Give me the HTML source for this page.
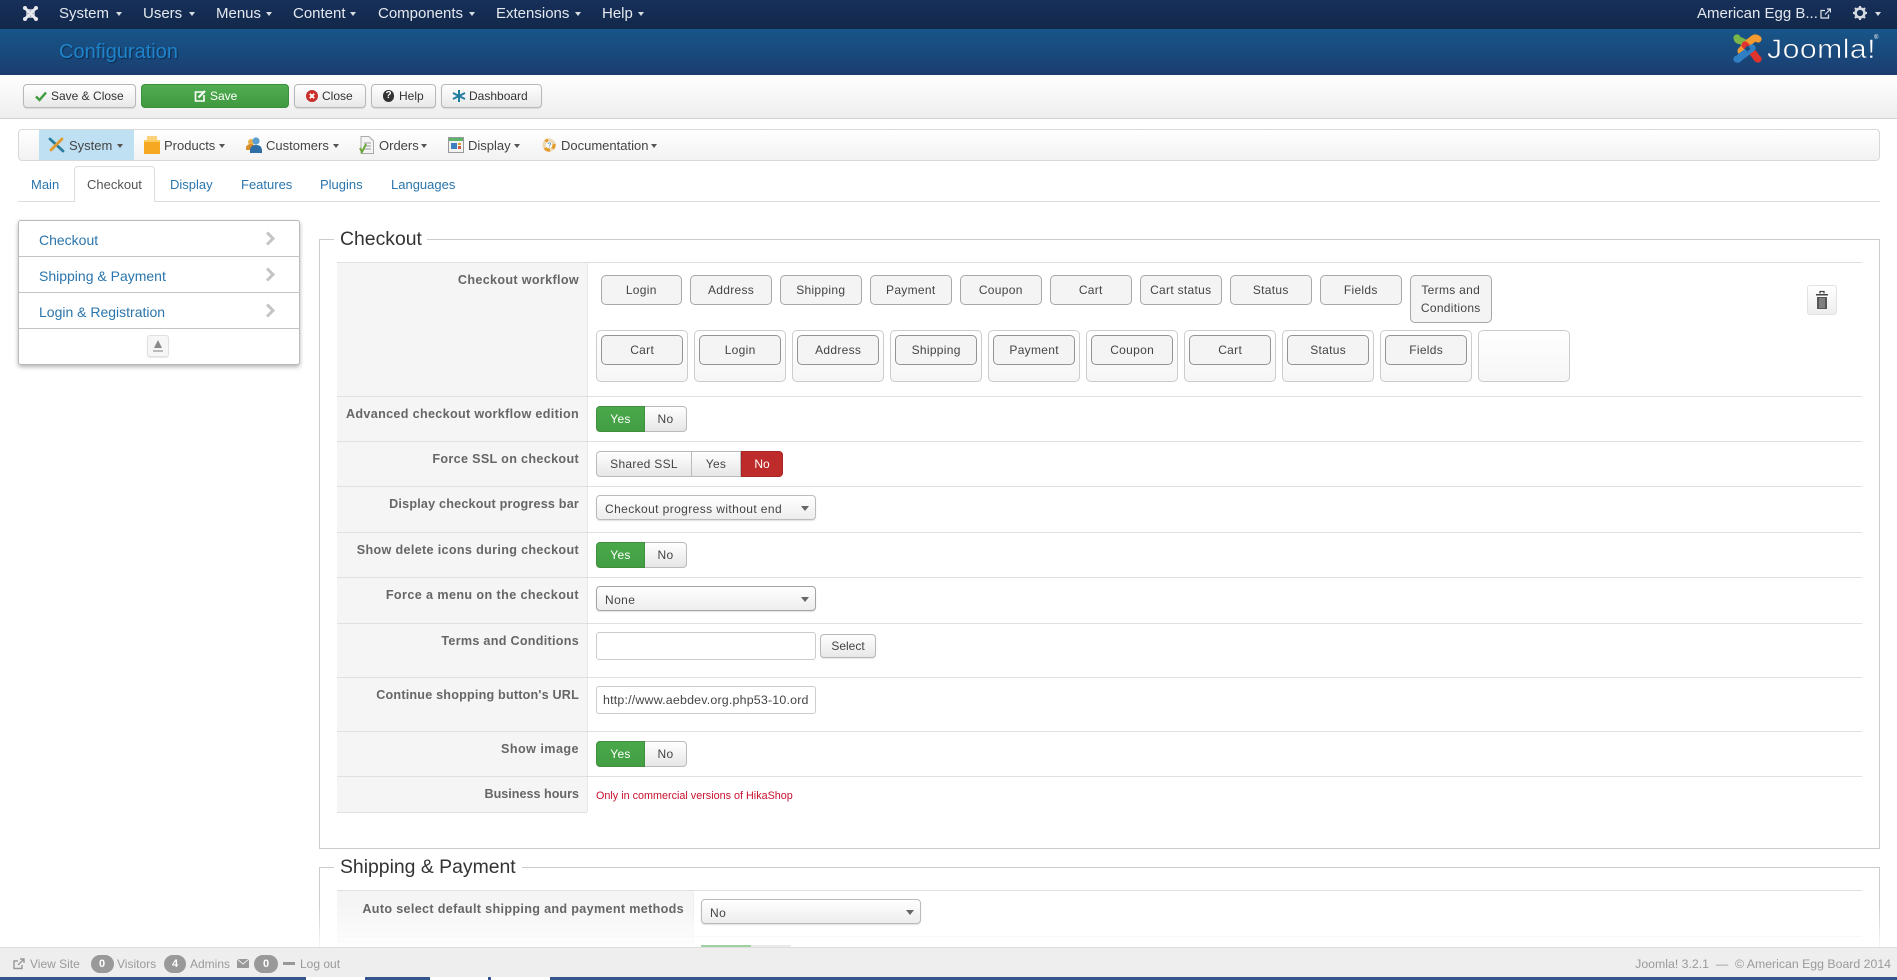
<!DOCTYPE html>
<html><head><meta charset="utf-8"><title>Configuration</title>
<style>
html,body{margin:0;padding:0;width:1897px;height:980px;overflow:hidden;background:#fff;font-family:"Liberation Sans",sans-serif;font-size:13px;color:#333}
div,span,svg{position:absolute;box-sizing:border-box}
.t{white-space:nowrap;line-height:20px;height:20px}
.nav{color:#e4e8ee;font-size:15px;top:4px}
.c{width:0;height:0;border-style:solid;border-color:transparent;border-width:4px 3.5px 0}
.cw{border-top-color:#d8dde4;top:12px}
.cd{border-top-color:#555;top:144px}
.btn{background:linear-gradient(#fff,#e8e8e8);border:1px solid #b8b8b8;border-radius:4px;box-shadow:0 1px 1px rgba(0,0,0,.1)}
.tb{top:86px;font-size:12px;color:#333}
.m{top:136px;color:#444;font-size:13px}
.tab{top:175px;color:#2a75ad;font-size:13px}
.side{left:39px;color:#2a75ad;font-size:14px}
.key{width:250.5px;left:337px;background:#f5f5f5}
.hl{height:1px;background:#e0e0e0}
.lb{right:1318px;font-weight:bold;color:#666;font-size:12.6px;letter-spacing:.33px;text-align:right}
.w{height:30px;width:81.5px;background:#f4f4f4;border:1px solid #a8a8a8;border-radius:5px;top:275px;text-align:center;line-height:28px;font-size:12px;letter-spacing:.3px;color:#444}
.box{width:91.5px;height:52px;top:330px;border:1px solid #ccc;border-radius:5px;background:linear-gradient(#fff,#f6f6f6)}
.w2{top:335px;border-color:#949494}
.y{background:linear-gradient(#4aa84a,#439e43);color:#fff;border:1px solid #3f8f3f;border-radius:4px 0 0 4px;width:49px;height:26px;left:596px;text-align:center;line-height:24px;font-size:12px;letter-spacing:.3px}
.n{background:linear-gradient(#fff,#e6e6e6);color:#444;border:1px solid #bbb;border-left:0;border-radius:0 4px 4px 0;width:42px;height:26px;left:645px;text-align:center;line-height:24px;font-size:12px;letter-spacing:.3px}
.sel{left:596px;width:220px;height:25px;border:1px solid #bbb;border-radius:4px;background:linear-gradient(#fff,#ededed);font-size:12px;letter-spacing:.4px;color:#444;line-height:26px;padding-left:8px;box-shadow:0 1px 1px rgba(0,0,0,.12)}
.sel .c{right:6px;top:10px;border-top-color:#666;border-width:5px 4px 0}
.inp{left:596px;width:220px;height:28px;border:1px solid #ccc;border-radius:3px;background:#fff;color:#444;font-size:12.4px;letter-spacing:.2px;line-height:26px;padding-left:6px;white-space:nowrap;overflow:hidden}
.f{top:954px;color:#9a9a9a;font-size:12px}
.pill{top:955px;height:18px;background:#999;color:#fff;border-radius:9px;text-align:center;font-size:11px;font-weight:bold;line-height:18px}
</style></head><body>

<!-- top bar -->
<div style="left:0;top:0;width:1897px;height:29px;background:linear-gradient(#17305a,#12284a)"></div>
<svg style="left:22px;top:5px" width="17" height="17" viewBox="0 0 17 17" fill="none" stroke="#e6e8ec" stroke-width="3"><path d="M3 3L14 14M14 3L3 14"/><circle cx="3" cy="3" r="2" fill="#e6e8ec" stroke="none"/><circle cx="14" cy="3" r="2" fill="#e6e8ec" stroke="none"/><circle cx="3" cy="14" r="2" fill="#e6e8ec" stroke="none"/><circle cx="14" cy="14" r="2" fill="#e6e8ec" stroke="none"/><rect x="5" y="5" width="7" height="7" stroke-width="1.4"/></svg>
<div class="t nav" style="left:59px">System</div><div class="c cw" style="left:116px"></div>
<div class="t nav" style="left:143px">Users</div><div class="c cw" style="left:189px"></div>
<div class="t nav" style="left:216px">Menus</div><div class="c cw" style="left:266px"></div>
<div class="t nav" style="left:293px">Content</div><div class="c cw" style="left:350px"></div>
<div class="t nav" style="left:378px">Components</div><div class="c cw" style="left:469px"></div>
<div class="t nav" style="left:496px">Extensions</div><div class="c cw" style="left:575px"></div>
<div class="t nav" style="left:602px">Help</div><div class="c cw" style="left:638px"></div>
<div class="t nav" style="left:1697px">American Egg B...</div>
<svg style="left:1820px;top:8px" width="11" height="11" viewBox="0 0 11 11" fill="none" stroke="#dfe3e9" stroke-width="1.2"><path d="M8.5 6.5V10H1V2.5H5M5 6.5L10 1.5M7 1H10.5V4.5"/></svg>
<svg style="left:1853px;top:6px" width="14" height="14" viewBox="0 0 14 14"><circle cx="7" cy="7" r="4.4" fill="none" stroke="#d5d9e0" stroke-width="2.6"/><path d="M7 0V3M7 11V14M0 7H3M11 7H14M2 2L4 4M10 10L12 12M12 2L10 4M4 10L2 12" stroke="#d5d9e0" stroke-width="2.2"/></svg>
<div class="c cw" style="left:1875px"></div>

<!-- header -->
<div style="left:0;top:29px;width:1897px;height:46px;background:linear-gradient(#175689,#1b3d70)"></div>
<div class="t" style="left:59px;top:41px;font-size:20px;line-height:22px;height:22px;color:#1e84cb;text-shadow:1px 1px 1px rgba(0,0,0,.4)">Configuration</div>
<svg style="left:1732px;top:33px" width="31" height="31" viewBox="0 0 31 31" fill="none" stroke-width="7.2" stroke-linecap="round" stroke-linejoin="round">
<path d="M5 5C6 9 7 6 11 9L19 18" stroke="#7ab648"/>
<path d="M26 6C22 3 21 7 17 9L9 18" stroke="#f39a30"/>
<path d="M13 12L21 20C24 23 24 25 26 26" stroke="#e1332d"/>
<path d="M5 26C7 27 8 23 11 22L20 15" stroke="#2f7fc4"/>
<path d="M12.5 15.5L15.5 12.5L18.5 15.5L15.5 18.5Z" fill="#1b4a7c" stroke="none"/></svg>
<div class="t" style="left:1767px;top:32px;height:34px;line-height:34px;font-size:27px;color:#fff;letter-spacing:.4px;-webkit-text-stroke:.55px #1a4677;transform:scaleX(1.12);transform-origin:left center">Joomla!</div>
<div class="t" style="left:1874px;top:34px;font-size:6px;line-height:8px;height:8px;color:#fff">®</div>

<!-- toolbar -->
<div style="left:0;top:75px;width:1897px;height:44px;background:linear-gradient(#fff,#eee);border-bottom:1px solid #d2d2d2"></div>
<div class="btn" style="left:23px;top:84px;width:113px;height:24px"></div>
<svg style="left:35px;top:90px" width="12" height="12" viewBox="0 0 12 12"><path d="M1 6.5L4.5 10L11 2.5" fill="none" stroke="#3f9b3f" stroke-width="2.4"/></svg>
<div class="t tb" style="left:51px">Save &amp; Close</div>
<div style="left:141px;top:84px;width:148px;height:24px;background:linear-gradient(#52ad52,#3f9a3f);border:1px solid #3d8f3d;border-radius:4px"></div>
<svg style="left:194px;top:90px" width="12" height="12" viewBox="0 0 12 12" fill="none" stroke="#fff" stroke-width="1.6"><path d="M9 2H1.5V11H10V5"/><path d="M4.5 7.5L11 1" stroke-width="2"/></svg>
<div class="t tb" style="left:210px;color:#fff">Save</div>
<div class="btn" style="left:294px;top:84px;width:72px;height:24px"></div>
<svg style="left:306px;top:90px" width="12" height="12" viewBox="0 0 12 12"><circle cx="6" cy="6" r="6" fill="#c9302c"/><path d="M3.8 3.8L8.2 8.2M8.2 3.8L3.8 8.2" stroke="#fff" stroke-width="1.8"/></svg>
<div class="t tb" style="left:322px">Close</div>
<div class="btn" style="left:371px;top:84px;width:65px;height:24px"></div>
<div style="left:383px;top:90px;width:11px;height:12px;border-radius:6px;background:#333;color:#fff;font-size:10px;font-weight:bold;line-height:12px;text-align:center">?</div>
<div class="t tb" style="left:399px">Help</div>
<div class="btn" style="left:441px;top:84px;width:101px;height:24px"></div>
<svg style="left:452px;top:89px" width="14" height="14" viewBox="0 0 14 14" stroke="#1f7d9e" stroke-width="2" fill="none"><path d="M7 1V13M1 4L13 10M13 4L1 10"/></svg>
<div class="t tb" style="left:469px">Dashboard</div>

<!-- menu -->
<div style="left:18px;top:129px;width:1862px;height:32px;background:linear-gradient(#fff,#f2f2f2);border:1px solid #d8d8d8;border-radius:4px"></div>
<div style="left:39px;top:130px;width:95px;height:30px;background:#bfe0f2"></div>
<svg style="left:48px;top:137px" width="17" height="16" viewBox="0 0 17 16" fill="none" stroke-linecap="round"><path d="M2 2L15 14" stroke="#2a7d9c" stroke-width="2.8"/><path d="M14 2L3 13" stroke="#e29a2e" stroke-width="2.8"/></svg>
<div class="t m" style="left:69px">System</div><div class="c cd" style="left:117px"></div>
<svg style="left:144px;top:136px" width="16" height="18" viewBox="0 0 16 18"><path d="M3 0H13V4H3Z" fill="#fbd27a"/><path d="M0 4H16V18H0Z" fill="#f6a823"/><path d="M0 4H16V6H0Z" fill="#ffcb5c"/></svg>
<div class="t m" style="left:164px">Products</div><div class="c cd" style="left:219px"></div>
<svg style="left:245px;top:136px" width="18" height="18" viewBox="0 0 18 18"><circle cx="6" cy="6" r="3" fill="#e9b04a"/><path d="M1 12C1 9 4 8 6 8S10 9 10 12V14H1Z" fill="#d88f2a"/><circle cx="11" cy="5" r="3.6" fill="#5b9fd0"/><path d="M5 15C5 10 8 9 11 9S17 10 17 15V17H5Z" fill="#2c6ea5"/></svg>
<div class="t m" style="left:266px">Customers</div><div class="c cd" style="left:333px"></div>
<svg style="left:359px;top:136px" width="15" height="18" viewBox="0 0 15 18"><path d="M2 .5H10L14.5 5V17.5H2Z" fill="#f4f4f4" stroke="#aaa"/><path d="M5 7H12M5 10H12M5 13H12" stroke="#9a9a9a"/><path d="M1 12L3 16L7 8" fill="none" stroke="#6aa83a" stroke-width="2"/></svg>
<div class="t m" style="left:379px">Orders</div><div class="c cd" style="left:421px"></div>
<svg style="left:448px;top:137px" width="16" height="16" viewBox="0 0 16 16"><rect x=".5" y=".5" width="15" height="15" fill="#f2f2f2" stroke="#999"/><rect x="1" y="1" width="14" height="3" fill="#5ab56b"/><rect x="3" y="6" width="6" height="6" fill="#3d7fc0"/><rect x="10" y="6" width="3" height="2" fill="#e0a030"/><rect x="10" y="9" width="3" height="3" fill="#d05a4a"/></svg>
<div class="t m" style="left:468px">Display</div><div class="c cd" style="left:514px"></div>
<svg style="left:542px;top:138px" width="14" height="14" viewBox="0 0 14 14" fill="none" stroke-width="3.2"><circle cx="7" cy="7" r="5" stroke="#ecd9b4"/><path d="M3.5 3.5A5 5 0 0 1 6 2M12 6A5 5 0 0 1 10.5 10.5M8 12A5 5 0 0 1 3 10" stroke="#e59a2c"/><text x="5.4" y="9.5" font-size="7" fill="#3a7fc0" stroke="none" font-family="Liberation Sans">?</text></svg>
<div class="t m" style="left:561px">Documentation</div><div class="c cd" style="left:651px"></div>

<!-- tabs -->
<div style="left:18px;top:201px;width:1862px;height:1px;background:#ddd"></div>
<div style="left:74px;top:166px;width:81px;height:36px;background:#fff;border:1px solid #ddd;border-bottom:0;border-radius:4px 4px 0 0"></div>
<div class="t tab" style="left:31px">Main</div>
<div class="t tab" style="left:87px;color:#555">Checkout</div>
<div class="t tab" style="left:170px">Display</div>
<div class="t tab" style="left:241px">Features</div>
<div class="t tab" style="left:320px">Plugins</div>
<div class="t tab" style="left:391px">Languages</div>

<!-- side -->
<div style="left:18px;top:220px;width:282px;height:145px;background:#fff;border:1px solid #bbb;border-radius:3px;box-shadow:0 2px 4px rgba(0,0,0,.3)"></div>
<div class="hl" style="left:19px;top:256px;width:280px;background:#c4c4c4"></div>
<div class="hl" style="left:19px;top:292px;width:280px;background:#c4c4c4"></div>
<div class="hl" style="left:19px;top:328px;width:280px;background:#c4c4c4"></div>
<div class="t side" style="top:230px">Checkout</div>
<div class="t side" style="top:266px">Shipping &amp; Payment</div>
<div class="t side" style="top:302px">Login &amp; Registration</div>
<svg style="left:265px;top:231px" width="11" height="15" viewBox="0 0 11 15"><path d="M2 1.5L8 7.5L2 13.5" fill="none" stroke="#c4c4c4" stroke-width="3"/></svg>
<svg style="left:265px;top:267px" width="11" height="15" viewBox="0 0 11 15"><path d="M2 1.5L8 7.5L2 13.5" fill="none" stroke="#c4c4c4" stroke-width="3"/></svg>
<svg style="left:265px;top:303px" width="11" height="15" viewBox="0 0 11 15"><path d="M2 1.5L8 7.5L2 13.5" fill="none" stroke="#c4c4c4" stroke-width="3"/></svg>
<div style="left:147px;top:335px;width:22px;height:22px;background:#f6f6f6;border:1px solid #e0e0e0;border-radius:3px;box-shadow:0 1px 1px rgba(0,0,0,.1)"></div>
<svg style="left:152px;top:340px" width="12" height="13" viewBox="0 0 12 13"><path d="M6 0L10 8H2Z" fill="#8a8a8a"/><rect x="1" y="10" width="10" height="2" fill="#bbb"/></svg>

<!-- fieldset 1 -->
<div style="left:319px;top:239px;width:1561px;height:610px;border:1px solid #ccc"></div>
<div class="t" style="left:334px;top:227px;height:24px;line-height:24px;padding:0 6px;width:93px;background:#fff;font-size:19.4px;color:#333">Checkout</div>
<div class="key" style="top:262px;height:550px"></div>
<div class="hl" style="left:587px;top:262px;width:1px;height:550px;background:#e6e6e6"></div>
<div class="hl" style="left:337px;top:262px;width:1525px"></div>
<div class="hl" style="left:337px;top:396px;width:1525px"></div>
<div class="hl" style="left:337px;top:441px;width:1525px"></div>
<div class="hl" style="left:337px;top:486px;width:1525px"></div>
<div class="hl" style="left:337px;top:532px;width:1525px"></div>
<div class="hl" style="left:337px;top:577px;width:1525px"></div>
<div class="hl" style="left:337px;top:623px;width:1525px"></div>
<div class="hl" style="left:337px;top:677px;width:1525px"></div>
<div class="hl" style="left:337px;top:731px;width:1525px"></div>
<div class="hl" style="left:337px;top:776px;width:1525px"></div>
<div class="hl" style="left:337px;top:812px;width:250px"></div>

<div class="t lb" style="top:270px">Checkout workflow</div>
<div class="t lb" style="top:404px">Advanced checkout workflow edition</div>
<div class="t lb" style="top:449px">Force SSL on checkout</div>
<div class="t lb" style="top:494px;letter-spacing:.2px">Display checkout progress bar</div>
<div class="t lb" style="top:540px">Show delete icons during checkout</div>
<div class="t lb" style="top:585px;letter-spacing:.4px">Force a menu on the checkout</div>
<div class="t lb" style="top:631px;letter-spacing:.28px">Terms and Conditions</div>
<div class="t lb" style="top:685px;letter-spacing:.2px">Continue shopping button's URL</div>
<div class="t lb" style="top:739px;letter-spacing:.45px">Show image</div>
<div class="t lb" style="top:784px;letter-spacing:0">Business hours</div>

<div class="w" style="left:600.5px">Login</div>
<div class="w" style="left:690.3px">Address</div>
<div class="w" style="left:780px">Shipping</div>
<div class="w" style="left:870px">Payment</div>
<div class="w" style="left:960px">Coupon</div>
<div class="w" style="left:1050px">Cart</div>
<div class="w" style="left:1140px">Cart status</div>
<div class="w" style="left:1230px">Status</div>
<div class="w" style="left:1320px">Fields</div>
<div class="w" style="left:1410px;height:48px;line-height:18px;padding-top:5px">Terms and Conditions</div>

<div class="box" style="left:596.4px"></div><div class="box" style="left:694.4px"></div><div class="box" style="left:792.4px"></div><div class="box" style="left:890.4px"></div><div class="box" style="left:988.4px"></div><div class="box" style="left:1086.4px"></div><div class="box" style="left:1184.4px"></div><div class="box" style="left:1282.4px"></div><div class="box" style="left:1380.4px"></div><div class="box" style="left:1478.4px"></div>
<div class="w w2" style="left:601.4px">Cart</div>
<div class="w w2" style="left:699.4px">Login</div>
<div class="w w2" style="left:797.4px">Address</div>
<div class="w w2" style="left:895.4px">Shipping</div>
<div class="w w2" style="left:993.4px">Payment</div>
<div class="w w2" style="left:1091.4px">Coupon</div>
<div class="w w2" style="left:1189.4px">Cart</div>
<div class="w w2" style="left:1287.4px">Status</div>
<div class="w w2" style="left:1385.4px">Fields</div>

<div style="left:1807px;top:285px;width:30px;height:30px;background:linear-gradient(#fff,#eee);border:1px solid #e2e2e2;border-radius:3px"></div>
<svg style="left:1815px;top:290px" width="14" height="20" viewBox="0 0 14 20"><path d="M1 4H13V5.5H1Z" fill="#444"/><path d="M5 3.5V1.5H9V3.5" fill="none" stroke="#444" stroke-width="1.3"/><path d="M2 7H12V19H2Z" fill="#555"/><path d="M5 8V18M7 8V18M9 8V18" stroke="#aaa"/></svg>

<div class="y" style="top:406px">Yes</div><div class="n" style="top:406px">No</div>

<div class="n" style="left:596px;top:451px;width:96px;border:1px solid #bbb;border-radius:4px 0 0 4px">Shared SSL</div>
<div class="n" style="left:692px;top:451px;width:49px;border-radius:0">Yes</div>
<div style="left:741px;top:451px;width:42px;height:26px;background:#bd2c2a;border:1px solid #a82523;border-radius:0 4px 4px 0;color:#fff;text-align:center;line-height:24px;font-size:12px">No</div>

<div class="sel" style="top:495px">Checkout progress without end<div class="c"></div></div>
<div class="y" style="top:542px">Yes</div><div class="n" style="top:542px">No</div>
<div class="sel" style="top:586px;border-color:#a4a4a4">None<div class="c"></div></div>
<div class="inp" style="top:632px"></div>
<div class="btn" style="left:820px;top:634px;width:56px;height:24px;text-align:center;line-height:22px;font-size:12px;color:#444">Select</div>
<div class="inp" style="top:686px">http://www.aebdev.org.php53-10.ord</div>
<div class="y" style="top:741px">Yes</div><div class="n" style="top:741px">No</div>
<div class="t" style="left:596px;top:786px;font-size:10.8px;color:#c8102e">Only in commercial versions of HikaShop</div>

<!-- fieldset 2 -->
<div style="left:319px;top:867px;width:1561px;height:113px;border:1px solid #ccc;border-bottom:0"></div>
<div class="t" style="left:334px;top:855px;height:24px;line-height:24px;padding:0 6px;width:188px;background:#fff;font-size:19.4px;color:#333">Shipping &amp; Payment</div>
<div style="left:337px;top:890px;width:356px;height:90px;background:#f5f5f5"></div>
<div class="hl" style="left:693px;top:890px;width:1px;height:90px;background:#eee"></div>
<div class="hl" style="left:337px;top:890px;width:1525px"></div>
<div class="hl" style="left:337px;top:936px;width:1525px;background:#ececec"></div>
<div style="left:0;top:905px;width:1897px;height:42px;background:linear-gradient(rgba(255,255,255,0),rgba(255,255,255,.85))"></div>
<div class="t lb" style="right:1213px;top:899px">Auto select default shipping and payment methods</div>
<div class="sel" style="left:701px;top:899px">No<div class="c"></div></div>
<div style="left:701px;top:945px;width:50px;height:5px;background:#9fd09f"></div>
<div style="left:751px;top:945px;width:40px;height:5px;background:#eaeaea"></div>

<!-- footer -->
<div style="left:0;top:947px;width:1897px;height:30px;background:#eee;border-top:1px solid #ddd"></div>
<svg style="left:13px;top:958px" width="12" height="12" viewBox="0 0 12 12" fill="none" stroke="#999" stroke-width="1.4"><path d="M9 7V10.5H1V3H5M5 7L10.5 1.5M7 1H11V5"/></svg>
<div class="t f" style="left:30px">View Site</div>
<div class="pill" style="left:90.5px;width:23px">0</div>
<div class="t f" style="left:117px">Visitors</div>
<div class="pill" style="left:164px;width:22px">4</div>
<div class="t f" style="left:190px">Admins</div>
<svg style="left:237px;top:959px" width="12" height="9" viewBox="0 0 12 9"><rect width="12" height="9" fill="#999"/><path d="M0 0L6 5L12 0" fill="none" stroke="#eee"/></svg>
<div class="pill" style="left:254px;width:24px">0</div>
<div style="left:283px;top:962px;width:12px;height:3px;background:#999"></div>
<div class="t f" style="left:300px">Log out</div>
<div class="t f" style="right:6px;font-size:12.3px">Joomla! 3.2.1 &nbsp;— &nbsp;© American Egg Board 2014</div>

<div style="left:0;top:977px;width:1897px;height:3px;background:#34558c"></div>
<div style="left:306px;top:977px;width:59px;height:3px;background:#fff"></div>
<div style="left:430px;top:977px;width:58px;height:3px;background:#fff"></div>
<div style="left:491px;top:977px;width:59px;height:3px;background:#fff"></div>
</body></html>
